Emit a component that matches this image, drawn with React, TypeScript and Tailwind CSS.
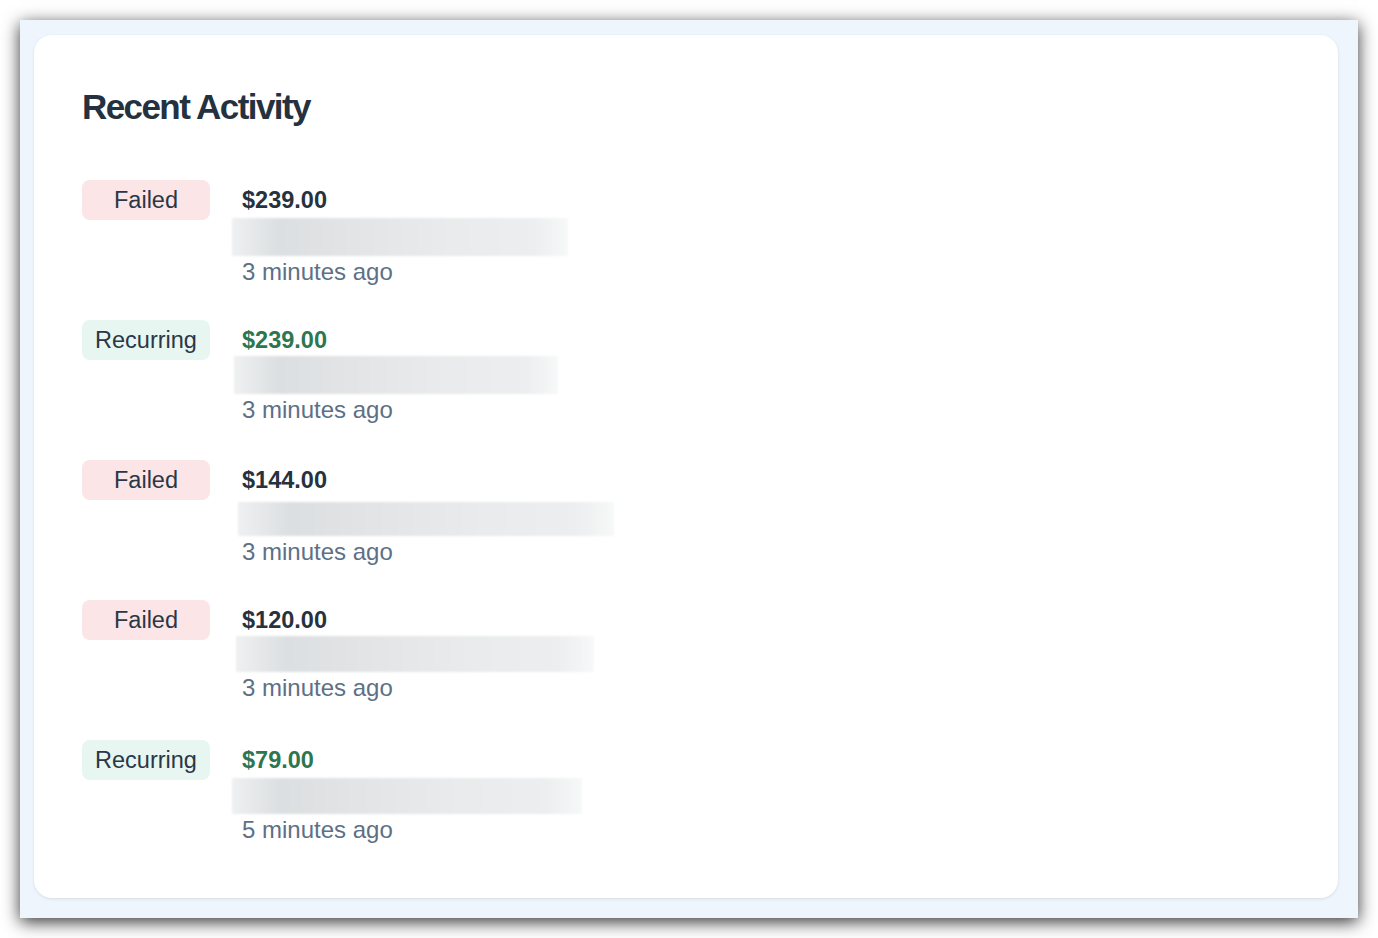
import React from "react";

type Activity = {
  status: "Failed" | "Recurring";
  amount: string;
  time: string;
  barClass: string;
};

const activities: Activity[] = [
  { status: "Failed", amount: "$239.00", time: "3 minutes ago", barClass: "ml-[-10px] mt-[-2px] w-[336px] h-[38px]" },
  { status: "Recurring", amount: "$239.00", time: "3 minutes ago", barClass: "ml-[-8px] mt-[-4px] w-[324px] h-[38px]" },
  { status: "Failed", amount: "$144.00", time: "3 minutes ago", barClass: "ml-[-4px] mt-[2px] w-[376px] h-[34px]" },
  { status: "Failed", amount: "$120.00", time: "3 minutes ago", barClass: "ml-[-6px] mt-[-4px] w-[358px] h-[36px]" },
  { status: "Recurring", amount: "$79.00", time: "5 minutes ago", barClass: "ml-[-10px] mt-[-2px] w-[350px] h-[36px]" },
];

function StatusBadge({ status }: { status: Activity["status"] }) {
  const failed = status === "Failed";
  return (
    <div
      className={
        "flex h-10 w-[128px] shrink-0 items-center justify-center rounded-lg pt-[2px] text-[23.5px] text-[#2b3746] " +
        (failed ? "bg-[#fbe5e7]" : "bg-[#e7f6f1]")
      }
    >
      {status}
    </div>
  );
}

function ActivityRow({ item }: { item: Activity }) {
  const failed = item.status === "Failed";
  return (
    <div className="flex h-[140px] gap-8">
      <StatusBadge status={item.status} />
      <div className="flex flex-col">
        <div
          className={
            "h-10 text-[23.5px] font-bold leading-10 " +
            (failed ? "text-[#27323f]" : "text-[#2e7650]")
          }
        >
          {item.amount}
        </div>
        {/* redacted description */}
        <div
          className={
            item.barClass +
            " bg-[linear-gradient(to_right,#eef0f1_0%,#dcdfe1_14%,#e2e4e6_35%,#e9ebec_65%,#eceeef_90%,#f7f8f8_100%)] blur-[1px]"
          }
        />
        <div className="h-8 text-[24px] leading-8 text-[#5d7085]">{item.time}</div>
      </div>
    </div>
  );
}

export default function App() {
  return (
    <div className="h-[938px] w-[1378px] bg-white p-5 font-['Liberation_Sans',Arial,sans-serif]">
      <div className="h-[898px] bg-[#eef5fc] pb-5 pl-[14px] pr-5 pt-[15px] shadow-[0_4px_16px_rgba(0,0,0,0.8)]">
        <div className="h-full rounded-[18px] bg-white px-12 pt-[52px] shadow-[0_1px_3px_rgba(30,50,80,0.12)]">
          <h2 className="h-10 text-[35px] font-bold leading-10 tracking-[-0.045em] text-[#25313f]">
            Recent Activity
          </h2>
          <div className="mt-[53px] flex flex-col">
            {activities.map((item, i) => (
              <ActivityRow key={i} item={item} />
            ))}
          </div>
        </div>
      </div>
    </div>
  );
}
